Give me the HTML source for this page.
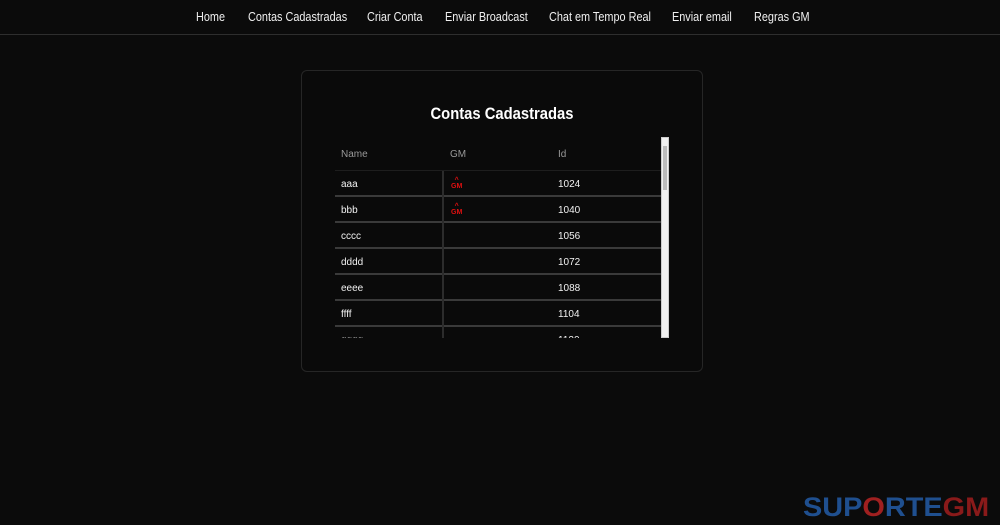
<!DOCTYPE html>
<html><head><meta charset="utf-8"><style>
*{margin:0;padding:0;box-sizing:border-box}
body{width:1000px;height:525px;background:#0b0b0b;font-family:"Liberation Sans",sans-serif;color:#eee;position:relative;overflow:hidden}
.nav{position:absolute;left:0;top:0;width:1000px;height:35px;border-bottom:1px solid #2e2e2e}
.nav span{position:absolute;top:10px;font-size:12.5px;color:#f0f0f0;white-space:nowrap;transform:scaleX(0.87);transform-origin:left}
.card{position:absolute;left:301px;top:70px;width:402px;height:302px;border:1px solid #262626;border-radius:6px;background:#0a0a0a}
h1{position:absolute;left:0;width:100%;top:33px;text-align:center;font-size:17px;font-weight:bold;color:#fff;transform:scaleX(0.87)}
.tbl{position:absolute;left:335px;top:137px;width:334px;height:201px;overflow:hidden}
.hdr{position:absolute;top:0;left:0;width:326px;height:34px;border-bottom:1px solid #1e1e1e;font-size:10px;color:#999}
.hdr span,.row span{position:absolute}
.row{position:absolute;left:0;width:326px;height:26px;border-bottom:2px solid #3a3a3a;font-size:10px;color:#f2f2f2}
.row .v{position:absolute;left:107px;top:0;width:2px;height:26px;background:#2c2c2c}
.gm{color:#e01010;font-weight:bold;font-size:7px;line-height:6px;text-align:center}
.sb{position:absolute;left:326px;top:0;width:8px;height:201px;background:#f0f0f0;border:1px solid #ccc}
.sb div{position:absolute;left:1px;top:8px;width:4px;height:44px;background:#bbb}
.logo{position:absolute;left:803px;top:492px;font-size:27px;font-weight:900;font-family:"Liberation Sans",sans-serif;transform:scaleX(1.07);transform-origin:left;white-space:nowrap}
</style></head><body>
<div class="nav">
<span style="left:196px">Home</span>
<span style="left:248px">Contas Cadastradas</span>
<span style="left:367px">Criar Conta</span>
<span style="left:445px">Enviar Broadcast</span>
<span style="left:549px">Chat em Tempo Real</span>
<span style="left:672px">Enviar email</span>
<span style="left:754px">Regras GM</span>
</div>
<div class="card"><h1>Contas Cadastradas</h1></div>
<div class="tbl">
<div class="hdr"><span style="left:6px;top:12px">Name</span><span style="left:115px;top:12px">GM</span><span style="left:223px;top:12px">Id</span></div>
<div class="row" style="top:34px"><div class="v"></div><span style="left:6px;top:8px">aaa</span><span class="gm" style="left:116px;top:7px">^<br>GM</span><span style="left:223px;top:8px">1024</span></div>
<div class="row" style="top:60px"><div class="v"></div><span style="left:6px;top:8px">bbb</span><span class="gm" style="left:116px;top:7px">^<br>GM</span><span style="left:223px;top:8px">1040</span></div>
<div class="row" style="top:86px"><div class="v"></div><span style="left:6px;top:8px">cccc</span><span style="left:223px;top:8px">1056</span></div>
<div class="row" style="top:112px"><div class="v"></div><span style="left:6px;top:8px">dddd</span><span style="left:223px;top:8px">1072</span></div>
<div class="row" style="top:138px"><div class="v"></div><span style="left:6px;top:8px">eeee</span><span style="left:223px;top:8px">1088</span></div>
<div class="row" style="top:164px"><div class="v"></div><span style="left:6px;top:8px">ffff</span><span style="left:223px;top:8px">1104</span></div>
<div class="row" style="top:190px"><div class="v"></div><span style="left:6px;top:8px">gggg</span><span style="left:223px;top:8px">1120</span></div>
<div class="sb"><div></div></div>
</div>
<div class="logo"><span style="color:#1f4f8f">SUP</span><span style="color:#a02020">O</span><span style="color:#1f4f8f">RTE</span><span style="color:#8a1a1a">GM</span></div>
</body></html>
